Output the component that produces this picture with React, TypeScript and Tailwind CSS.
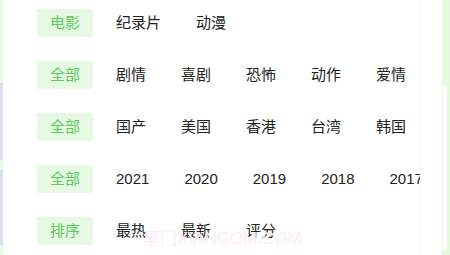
const rows = [
    { label: '电影', items: ['纪录片', '动漫'] },
    { label: '全部', items: ['剧情', '喜剧', '恐怖', '动作', '爱情'] },
    { label: '全部', items: ['国产', '美国', '香港', '台湾', '韩国'] },
    { label: '全部', items: ['2021', '2020', '2019', '2018', '2017'] },
    { label: '排序', items: ['最热', '最新', '评分'] },
];

export default function App() {
    return (
        <div
            className="relative flex h-[255px] w-[450px] overflow-hidden bg-white"
            style={{ fontFamily: '"Liberation Sans", "Noto Sans CJK SC", sans-serif' }}
        >
            {/* left edge of neighbouring panel */}
            <div className="flex w-[3px] shrink-0 flex-col">
                <div className="h-[83px] bg-[#e6fbe2]" />
                <div className="h-[77px] bg-[#dcdcf2]" />
                <div className="h-[10px] bg-[#e6fbe2]" />
                <div className="h-[75px] bg-[#dcdcf2]" />
                <div className="flex-1 bg-[#e6fbe2]" />
            </div>

            <div className="w-[417px] shrink-0 overflow-hidden pl-[34px] pt-[9px]">
                <div className="flex flex-col gap-[24px]">
                    {rows.map((row, i) => (
                        <div key={i} className="flex h-[28px] items-center">
                            <div className="flex h-[28px] w-[56px] shrink-0 items-center justify-center rounded-[2px] bg-[#e6fae3] text-[15px] text-[#5dc95d]">
                                {row.label}
                            </div>
                            <div className="ml-[23px] flex gap-[35px]">
                                {row.items.map((item) => (
                                    <span key={item} className="shrink-0 whitespace-nowrap text-[15px] text-[#222]">
                                        {item}
                                    </span>
                                ))}
                            </div>
                        </div>
                    ))}
                </div>
            </div>

            <div className="w-[22px] shrink-0 border-l border-[#f6f6f6]" />

            {/* right edge of neighbouring panel */}
            <div className="flex flex-1 bg-[#e3fbdc] pt-[85px] pb-[5px] pl-[1px]">
                <div className="w-[4px] rounded-sm bg-white" />
            </div>

            <div className="pointer-events-none absolute left-[143px] top-[226px] whitespace-nowrap text-[17px] text-[#fcebf5]">
                享门XIANGOM.COM
            </div>
        </div>
    );
}
